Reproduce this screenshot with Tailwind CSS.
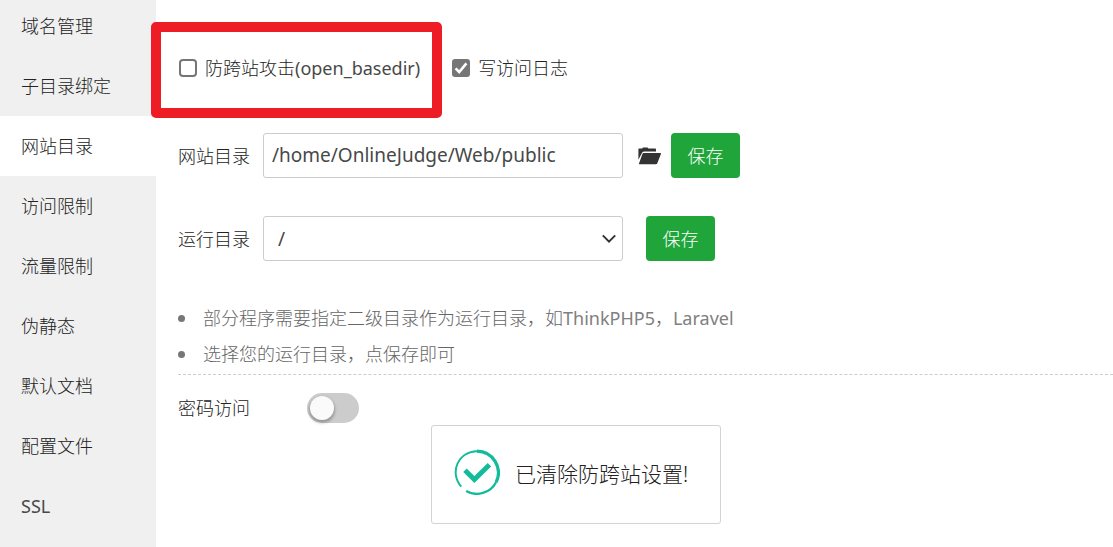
<!DOCTYPE html>
<html lang="zh-CN">
<head>
<meta charset="utf-8">
<meta name="viewport" content="width=device-width, initial-scale=1">
<title>网站目录</title>
<script src="https://cdn.jsdelivr.net/npm/@tailwindcss/browser@4"></script>
</head>
<body class="relative flex h-screen overflow-hidden bg-white font-['Noto_Sans','Noto_Sans_CJK_SC',sans-serif] text-[18px] leading-6 font-light text-[#222]">
  <nav class="-mt-1 flex w-39 shrink-0 flex-col bg-[#f0f0f0]">
    <a href="#" class="flex h-15 shrink-0 items-center pl-[21px]">域名管理</a>
    <a href="#" class="flex h-15 shrink-0 items-center pl-[21px]">子目录绑定</a>
    <a href="#" aria-current="page" class="flex h-15 shrink-0 items-center bg-white pl-[21px]">网站目录</a>
    <a href="#" class="flex h-15 shrink-0 items-center pl-[21px]">访问限制</a>
    <a href="#" class="flex h-15 shrink-0 items-center pl-[21px]">流量限制</a>
    <a href="#" class="flex h-15 shrink-0 items-center pl-[21px]">伪静态</a>
    <a href="#" class="flex h-15 shrink-0 items-center pl-[21px]">默认文档</a>
    <a href="#" class="flex h-15 shrink-0 items-center pl-[21px]">配置文件</a>
    <a href="#" class="flex h-15 shrink-0 items-center pl-[21px] font-normal text-[#484848]">SSL</a>
  </nav>

  <main class="min-w-0 flex-1 pt-14 pl-[22px]">
    <div class="flex h-6 items-center gap-8">
      <label class="flex items-center gap-2">
        <input type="checkbox" class="ml-px size-[18px] appearance-none rounded-[4px] border-2 border-[#767676] bg-white">
        <span>防跨站攻击<span class="font-normal text-[#484848]">(open_basedir)</span></span>
      </label>
      <label class="flex items-center gap-2">
        <span class="relative flex">
          <input type="checkbox" checked class="size-[18px] appearance-none rounded-[3px] bg-[#767676]">
          <svg class="pointer-events-none absolute inset-0 size-[18px]" viewBox="0 0 18 18" fill="none" stroke="#fff" stroke-width="2.6"><path d="M3.6 9.4 7.2 13 14.4 4.4"/></svg>
        </span>
        <span>写访问日志</span>
      </label>
    </div>

    <div class="mt-[53px] flex items-center">
      <label for="site" class="w-[85px]">网站目录</label>
      <input id="site" type="text" value="/home/OnlineJudge/Web/public" class="h-[45px] w-[360px] rounded-[3px] border border-[#ccc] px-2 pb-0.5 text-[19px] font-normal text-[#484848]">
      <button type="button" aria-label="选择目录" class="ml-[15px] flex">
        <svg class="h-[18px] w-6" viewBox="0 0 24 18" fill="#333"><path d="M.4 12.8V2.2Q.4 1.6 1 1.6H4.2L5 .5H9.6L10.4 1.6H17.2Q18 1.6 18 2.4V4.5H6.4Q4.8 4.5 4.2 5.6Z"/><path d="M5.6 6H22.4Q23.3 6 22.9 6.9L19.2 16.4Q18.9 17.2 18 17.2H1.4Q.6 17.2 1 16.4L4.4 6.9Q4.8 6 5.6 6Z"/></svg>
      </button>
      <button type="button" class="ml-[9px] h-[45px] w-[69px] rounded-[4px] bg-[#20a53a] text-white">保存</button>
    </div>

    <div class="mt-[38px] flex items-center">
      <label for="run" class="w-[85px]">运行目录</label>
      <div class="relative">
        <select id="run" class="block h-[45px] w-[360px] appearance-none rounded-[3px] border border-[#ccc] bg-white px-[14px] text-[19px] font-normal text-[#484848]"><option>/</option></select>
        <svg class="pointer-events-none absolute top-[18px] right-[6px] h-[10px] w-4" viewBox="0 0 16 10" fill="none" stroke="#333" stroke-width="2"><path d="M1.8 1.4 8 7.6 14.2 1.4"/></svg>
      </div>
      <button type="button" class="ml-[23px] h-[45px] w-[69px] rounded-[4px] bg-[#20a53a] text-white">保存</button>
    </div>

    <ul class="mt-[39px] border-b border-dashed border-[#ccc] pb-0.5 leading-9 text-[#666]">
      <li class="flex items-center gap-[18px]"><span class="size-[7px] shrink-0 rounded-full bg-[#777]"></span><span>部分程序需要指定二级目录作为运行目录，如<span class="font-normal text-[#808080]">ThinkPHP5</span>，<span class="font-normal text-[#808080]">Laravel</span></span></li>
      <li class="flex items-center gap-[18px]"><span class="size-[7px] shrink-0 rounded-full bg-[#777]"></span>选择您的运行目录，点保存即可</li>
    </ul>

    <label class="mt-[17px] flex h-8 items-center">
      <span class="w-[129px]">密码访问</span>
      <span class="relative flex">
        <input type="checkbox" role="switch" class="h-[30px] w-[52px] appearance-none rounded-full bg-[#ccc]">
        <span class="pointer-events-none absolute top-[3px] left-[3px] size-6 rounded-full bg-[#fafafa] shadow-[0_2px_3px_1px_rgba(0,0,0,0.25)]"></span>
      </span>
    </label>
  </main>

  <div class="pointer-events-none absolute top-[22px] left-[151px] h-24 w-[291px] rounded-[5px] border-[10px] border-[#ee1c25]"></div>

  <div role="status" class="absolute top-[425px] left-[431px] flex h-[99px] w-[290px] items-center rounded-[3px] border border-[#d3d3d3] bg-white pb-0.5 pl-[22px] text-[21px]">
    <svg class="mb-1 size-[46px] shrink-0" viewBox="0 0 47 47" fill="none" stroke="#12bc9a">
      <path d="M12.4 42.8A22 22 0 0 0 43 34" stroke-width="2.4"/>
      <path d="M43 34A22 22 0 0 0 23.5 2.2" stroke-width="3.2"/>
      <path d="M23.5 2.2A21.6 21.6 0 0 0 7.4 38.4" stroke-width="2"/>
      <path d="M11.2 21.8 20.8 31.2 36.2 16" stroke-width="5"/>
    </svg>
    <span class="ml-[15px]">已清除防跨站设置!</span>
  </div>
</body>
</html>
